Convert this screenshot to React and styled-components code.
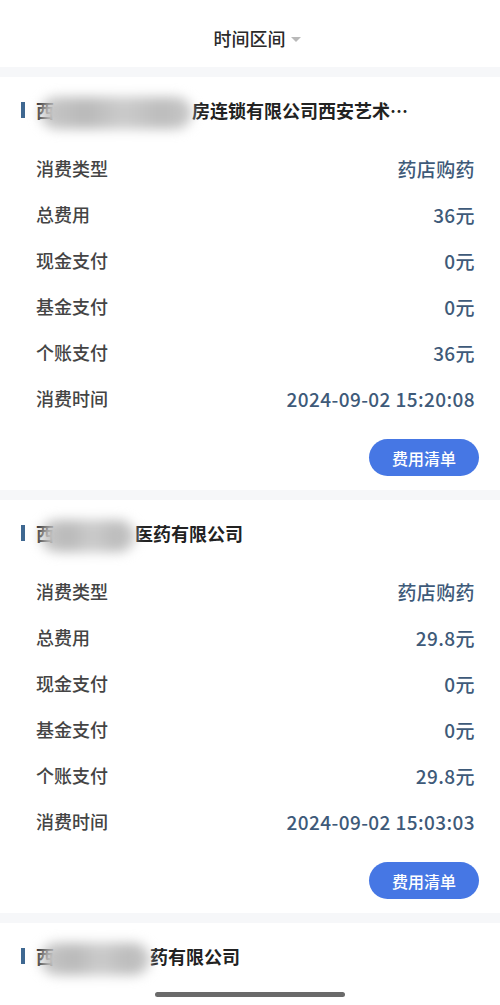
import * as React from "react";
import styled, { createGlobalStyle } from "styled-components";

const GlobalStyle = createGlobalStyle`
  html, body {
    margin: 0;
    padding: 0;
    background: #ffffff;
  }
  body {
    font-family: "Noto Sans CJK SC", "Noto Sans", sans-serif;
    color: #333;
  }
`;

const Page = styled.div`
  width: 500px;
  min-height: 1005px;
  background: #fff;
  overflow: hidden;
`;

const Header = styled.div`
  height: 67px;
  display: flex;
  align-items: center;
  justify-content: center;
  gap: 5px;
  padding: 9px 0 0 14px;
  box-sizing: border-box;
  font-size: 18px;
  font-weight: 500;
  color: #2b2b2b;
`;

const Caret = styled.span`
  width: 0;
  height: 0;
  margin-top: 2px;
  border-left: 5px solid transparent;
  border-right: 5px solid transparent;
  border-top: 5px solid #b9b9b9;
`;

const Divider = styled.div`
  height: 10px;
  background: #f6f7f9;
`;

const Card = styled.div`
  padding: 21px 21px 14px 21px;
`;

const Title = styled.div`
  height: 24px;
  display: flex;
  align-items: center;
  font-size: 18px;
  font-weight: 700;
  color: #222;
  white-space: nowrap;
  &::before {
    content: "";
    width: 4px;
    height: 16px;
    background: #3f6891;
    margin-right: 11px;
    flex: none;
  }
`;

const Blur = styled.span`
  display: inline-block;
  position: relative;
  z-index: 1;
  width: ${p => p.$w}px;
  height: 32px;
  margin-left: -14px;
  margin-top: 6px;
  border-radius: 16px;
  background: linear-gradient(90deg, #c9c9c9 0%, #b9b9b9 30%, #cbcbcb 55%, #bcbcbc 80%, #c8c8c8 100%);
  filter: blur(6px);
`;

const Rows = styled.div`
  margin-top: 23px;
  display: flex;
  flex-direction: column;
  padding: 0 4px 0 15px;
`;

const Row = styled.div`
  height: 46px;
  display: flex;
  align-items: center;
  justify-content: space-between;
  font-size: 18px;
`;

const Label = styled.span`
  color: #444;
  font-weight: 500;
`;

const Value = styled.span`
  color: #3e5a79;
  font-size: 19px;
  font-weight: 500;
  letter-spacing: 0.4px;
`;

const Actions = styled.div`
  margin-top: 18px;
  display: flex;
  justify-content: flex-end;
`;

const Button = styled.button`
  width: 110px;
  height: 37px;
  border: none;
  border-radius: 19px;
  background: #4677e4;
  color: #fff;
  font-family: inherit;
  font-size: 16px;
  font-weight: 500;
  padding: 0;
`;

const HomeBar = styled.div`
  position: fixed;
  left: 155px;
  top: 992px;
  width: 190px;
  height: 5px;
  border-radius: 3px;
  background: #6a6a6a;
`;

const records = [
  {
    head: "西",
    blur: 152,
    tail: "房连锁有限公司西安艺术…",
    total: "36元",
    fund: "0元",
    cash: "0元",
    own: "36元",
    time: "2024-09-02 15:20:08",
  },
  {
    head: "西",
    blur: 95,
    tail: "医药有限公司",
    total: "29.8元",
    fund: "0元",
    cash: "0元",
    own: "29.8元",
    time: "2024-09-02 15:03:03",
  },
];

function Record({ r }) {
  const rows = [
    ["消费类型", "药店购药"],
    ["总费用", r.total],
    ["现金支付", r.cash],
    ["基金支付", r.fund],
    ["个账支付", r.own],
    ["消费时间", r.time],
  ];
  return (
    <Card>
      <Title>
        {r.head}
        <Blur $w={r.blur} />
        {r.tail}
      </Title>
      <Rows>
        {rows.map(([k, v]) => (
          <Row key={k}>
            <Label>{k}</Label>
            <Value>{v}</Value>
          </Row>
        ))}
      </Rows>
      <Actions>
        <Button>费用清单</Button>
      </Actions>
    </Card>
  );
}

export default function App() {
  return (
    <Page>
      <GlobalStyle />
      <Header>
        时间区间
        <Caret />
      </Header>
      {records.map((r, i) => (
        <React.Fragment key={i}>
          <Divider />
          <Record r={r} />
        </React.Fragment>
      ))}
      <Divider />
      <Card>
        <Title>
          西
          <Blur $w={110} />
          药有限公司
        </Title>
      </Card>
      <HomeBar />
    </Page>
  );
}
